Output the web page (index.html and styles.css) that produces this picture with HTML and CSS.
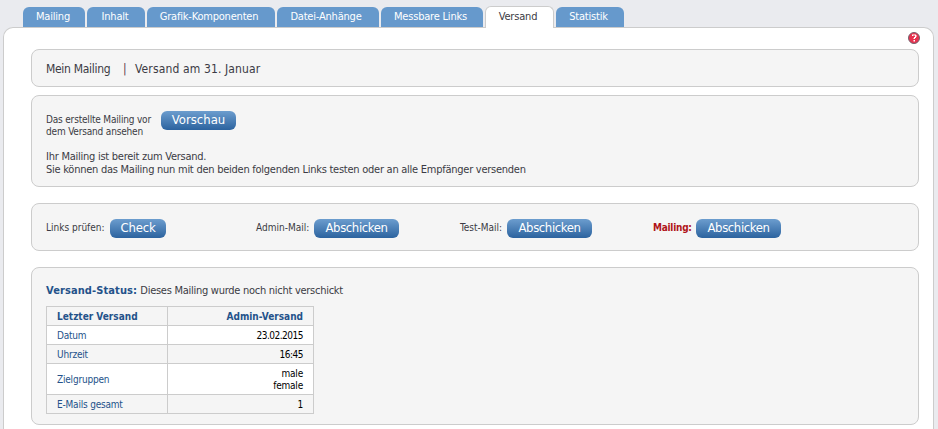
FILE: index.html
```html
<!DOCTYPE html>
<html lang="de">
<head>
<meta charset="utf-8">
<title>Versand</title>
<link rel="stylesheet" href="styles.css">
</head>
<body>
<nav class="tabs">
  <a class="tab tab-mailing"><span>Mailing</span></a>
  <a class="tab tab-inhalt"><span>Inhalt</span></a>
  <a class="tab tab-grafik"><span>Grafik-Komponenten</span></a>
  <a class="tab tab-datei"><span>Datei-Anhänge</span></a>
  <a class="tab tab-links"><span>Messbare Links</span></a>
  <a class="tab tab-active"><span>Versand</span></a>
  <a class="tab tab-statistik"><span>Statistik</span></a>
</nav>
<main class="panel">
  <div class="help-row">
    <svg class="help" viewBox="0 0 12 12">
      <circle cx="6" cy="6" r="5.5" fill="#e8324f" stroke="#73636f"/>
      <path d="M4 3h1v1h-1zM4 2.5h4v1h-4zM7 3h1.5v2h-1.5zM6 5h2v1h-2zM5.5 6h1.5v1h-1.5zM5.5 8h1.5v1.5h-1.5z" fill="#fff"/>
    </svg>
  </div>
  <section class="box title">
    <span class="t-name">Mein Mailing</span><span class="t-sep">|</span><span class="t-desc">Versand am 31. Januar</span>
  </section>
  <section class="box preview">
    <div class="preview-row">
      <p class="small tight">Das erstellte Mailing vor<br>dem Versand ansehen</p>
      <button class="btn btn-preview">Vorschau</button>
    </div>
    <p class="ready">Ihr Mailing ist bereit zum Versand.<br>Sie können das Mailing nun mit den beiden folgenden Links testen oder an alle Empfänger versenden</p>
  </section>
  <section class="box actions">
    <div class="action a-check"><span class="small">Links prüfen:</span><button class="btn btn-check">Check</button></div>
    <div class="action a-admin"><span class="small">Admin-Mail:</span><button class="btn">Abschicken</button></div>
    <div class="action a-test"><span class="small">Test-Mail:</span><button class="btn">Abschicken</button></div>
    <div class="action"><span class="small alert">Mailing:</span><button class="btn">Abschicken</button></div>
  </section>
  <section class="box status">
    <p class="status-line"><b>Versand-Status:</b> <span>Dieses Mailing wurde noch nicht verschickt</span></p>
    <table>
      <tr><th class="key">Letzter Versand</th><th>Admin-Versand</th></tr>
      <tr class="white"><td class="key">Datum</td><td class="num">23.02.2015</td></tr>
      <tr><td class="key">Uhrzeit</td><td class="num">16:45</td></tr>
      <tr class="white tall"><td class="key">Zielgruppen</td><td>male<br>female</td></tr>
      <tr><td class="key">E-Mails gesamt</td><td>1</td></tr>
    </table>
  </section>
</main>
</body>
</html>
```
FILE: styles.css
```css
* { box-sizing: border-box; }
html { height: 429px; overflow: hidden; background: #eaebef; }
body {
  margin: 0;
  padding: 6px 4px 0 3px;
  height: 429px;
  overflow: hidden;
  font-family: "DejaVu Sans Condensed", "DejaVu Sans", sans-serif;
  font-stretch: condensed;
  font-size: 11px;
  color: #3b3b44;
}
p { margin: 0; }
.tabs { display: flex; align-items: flex-end; gap: 2px; height: 22px; padding-left: 20px; margin-bottom: -1px; position: relative; }
.tab {
  height: 20px;
  margin-bottom: 1px;
  padding-right: 2px;
  border-radius: 6px 6px 0 0;
  background: #6699cc;
  color: #fff;
  line-height: 19px;
  letter-spacing: -0.2px;
  text-align: center;
  white-space: nowrap;
}
.tab-mailing { width: 62px; }
.tab-inhalt { width: 58px; }
.tab-grafik { width: 128px; padding-right: 4px; }
.tab-datei { width: 102px; padding-right: 4px; }
.tab-links { width: 102px; padding-right: 3px; }
.tab-statistik { width: 68px; padding-right: 3px; }
.tab-active { width: 69px; height: 22px; margin-bottom: 0; padding-right: 3px; line-height: 19px; background: #fff; border: 1px solid #ccc; border-bottom: 0; color: #3b3b44; }
.panel { height: 402px; padding: 0 14px 0 27px; border: 1px solid #ccc; border-bottom: 0; border-radius: 10px 10px 0 0; background: #fff; }
.help-row { display: flex; justify-content: flex-end; height: 21px; padding-top: 4px; margin-right: -1px; }
.help { width: 12px; height: 12px; }
.box { border: 1px solid #ccc; border-radius: 8px; background: #f5f5f5; padding-left: 14px; white-space: nowrap; }
.title { display: flex; align-items: center; height: 38px; margin-bottom: 8px; padding-top: 2px; font-size: 12px; }
.t-name { width: 77px; letter-spacing: -0.3px; }
.t-sep { width: 12px; color: #62364f; }
.t-desc { letter-spacing: 0.13px; }
.preview { height: 92px; margin-bottom: 16px; padding-top: 15px; }
.preview-row { display: flex; height: 39px; }
.preview-row p { width: 115px; padding-top: 3px; }
.small { font-size: 10px; line-height: 12px; }
.tight { letter-spacing: -0.18px; }
.ready { line-height: 13px; letter-spacing: -0.255px; }
.btn {
  width: 85px;
  height: 19px;
  padding: 0 0 2px;
  border: 0;
  border-radius: 6px;
  background: linear-gradient(#6c9dce, #2c639f);
  color: #fff;
  font: inherit;
  font-size: 13px;
  line-height: 17px;
  letter-spacing: -0.4px;
}
.btn-preview { width: 75px; letter-spacing: 0; }
.btn-check { width: 56px; letter-spacing: -0.2px; }
.actions { display: flex; height: 48px; margin-bottom: 16px; padding-top: 15px; }
.action { display: flex; justify-content: space-between; width: 128px; height: 19px; line-height: 18px; }
.action .small { line-height: 18px; }
.a-check { width: 120px; margin-right: 90px; }
.a-admin { width: 143px; margin-right: 61px; }
.a-test { width: 132px; margin-right: 61px; }
.alert { color: #b01419; font-weight: bold; letter-spacing: -0.25px; }
.status { height: 158px; padding-top: 16px; }
.status-line { line-height: 14px; height: 22px; }
.status-line b { color: #24528a; letter-spacing: 0.1px; }
.status-line span { letter-spacing: -0.27px; }
table { width: 268px; table-layout: fixed; border-collapse: collapse; font-size: 10px; line-height: 12px; }
th, td { height: 19px; padding: 1px 10px 0; border: 1px solid #ccc; text-align: right; color: #000; letter-spacing: -0.2px; }
th, .key { color: #24528a; }
th { letter-spacing: 0; }
td.key { letter-spacing: -0.2px; }
.num { letter-spacing: -0.5px; }
.key { width: 121px; text-align: left; }
.white { background: #fff; }
.tall td { height: 31px; }
```
